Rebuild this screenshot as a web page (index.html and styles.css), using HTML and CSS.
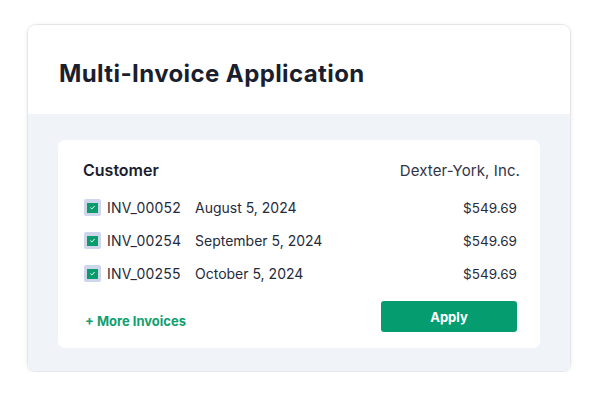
FILE: index.html
```html
<!DOCTYPE html>
<html lang="en">
<head>
  <meta charset="UTF-8" />
  <title>Multi-Invoice Application</title>
  <link rel="stylesheet" href="styles.css">
</head>
<body>
  <div class="card">
    <div class="card-header">
      <h1>Multi-Invoice Application</h1>
    </div>
    <div class="card-body">
      <div class="panel">
        <div class="customer-row">
          <span class="label">Customer</span>
          <span class="customer">Dexter-York, Inc.</span>
        </div>

        <div class="invoice">
          <span class="check"><span class="box"><svg viewBox="0 0 10 10" width="7" height="7"><path d="M2 5.2l2 1.9 4-4.2" fill="none" stroke="#fff" stroke-width="1.4"/></svg></span></span>
          <span class="inv-id">INV_00052</span>
          <span class="inv-date">August 5, 2024</span>
          <span class="amount">$549.69</span>
        </div>
        <div class="invoice">
          <span class="check"><span class="box"><svg viewBox="0 0 10 10" width="7" height="7"><path d="M2 5.2l2 1.9 4-4.2" fill="none" stroke="#fff" stroke-width="1.4"/></svg></span></span>
          <span class="inv-id">INV_00254</span>
          <span class="inv-date">September 5, 2024</span>
          <span class="amount">$549.69</span>
        </div>
        <div class="invoice">
          <span class="check"><span class="box"><svg viewBox="0 0 10 10" width="7" height="7"><path d="M2 5.2l2 1.9 4-4.2" fill="none" stroke="#fff" stroke-width="1.4"/></svg></span></span>
          <span class="inv-id">INV_00255</span>
          <span class="inv-date">October 5, 2024</span>
          <span class="amount">$549.69</span>
        </div>

        <div class="actions">
          <a class="more" href="#">+ More Invoices</a>
          <button class="apply">Apply</button>
        </div>
      </div>
    </div>
  </div>
</body>
</html>
```

FILE: styles.css
```css
body {
  font-family: Inter, "Noto Sans", sans-serif;
  background-color: #fff;
  margin: 0;
  padding: 24px 29px 0 27px;
  color: #1d2233;
}
.card {
  width: 544px;
  border: 1px solid #e4e6ea;
  border-radius: 9px;
  overflow: hidden;
  box-shadow: 0 1px 4px rgba(0, 0, 0, 0.08);
  box-sizing: border-box;
}
.card-header {
  background: #fff;
  height: 89px;
  padding: 0 31px;
  display: flex;
  align-items: center;
}
h1 {
  margin: 0;
  font-size: 24px;
  font-weight: 700;
  color: #1a1e2e;
  letter-spacing: 0.4px;
  padding-top: 8px;
}
.card-body {
  background: #f0f3f8;
  padding: 26px 30px 23px 30px;
}
.panel {
  background: #fff;
  border-radius: 7px;
  padding: 17px 20px 0 25px;
  height: 208px;
  box-sizing: border-box;
}
.customer-row {
  display: flex;
  justify-content: space-between;
  align-items: center;
  height: 26px;
  margin-bottom: 8px;
}
.label {
  font-size: 16px;
  font-weight: 600;
  color: #1a1e2e;
}
.customer {
  font-size: 15px;
  color: #2f3446;
  font-weight: 400;
  letter-spacing: 0.1px;
}
.invoice {
  display: flex;
  align-items: center;
  height: 33px;
  font-size: 14px;
  color: #262b3c;
  padding-right: 3px;
}
.check {
  width: 17px;
  height: 17px;
  background: #cdd6ea;
  border-radius: 2px;
  display: flex;
  align-items: center;
  justify-content: center;
  margin-left: 1px;
  margin-right: 6px;
}
.box {
  width: 11px;
  height: 10px;
  background: #0b9c6d;
  display: flex;
  align-items: center;
  justify-content: center;
}
.inv-id {
  width: 88px;
  letter-spacing: 0.2px;
}
.inv-date {
  flex: 1;
}
.amount {
  text-align: right;
  font-size: 13.5px;
}
.actions {
  display: flex;
  justify-content: space-between;
  align-items: center;
  margin-top: 11px;
  padding-right: 3px;
}
.more {
  font-size: 13px;
  font-weight: 700;
  color: #12a06f;
  text-decoration: none;
  margin-left: 2px;
  padding-top: 9px;
}
.apply {
  width: 136px;
  height: 31px;
  background: #059c6f;
  color: #fff;
  border: none;
  border-radius: 3px;
  font-family: inherit;
  font-size: 13px;
  font-weight: 700;
}
```
